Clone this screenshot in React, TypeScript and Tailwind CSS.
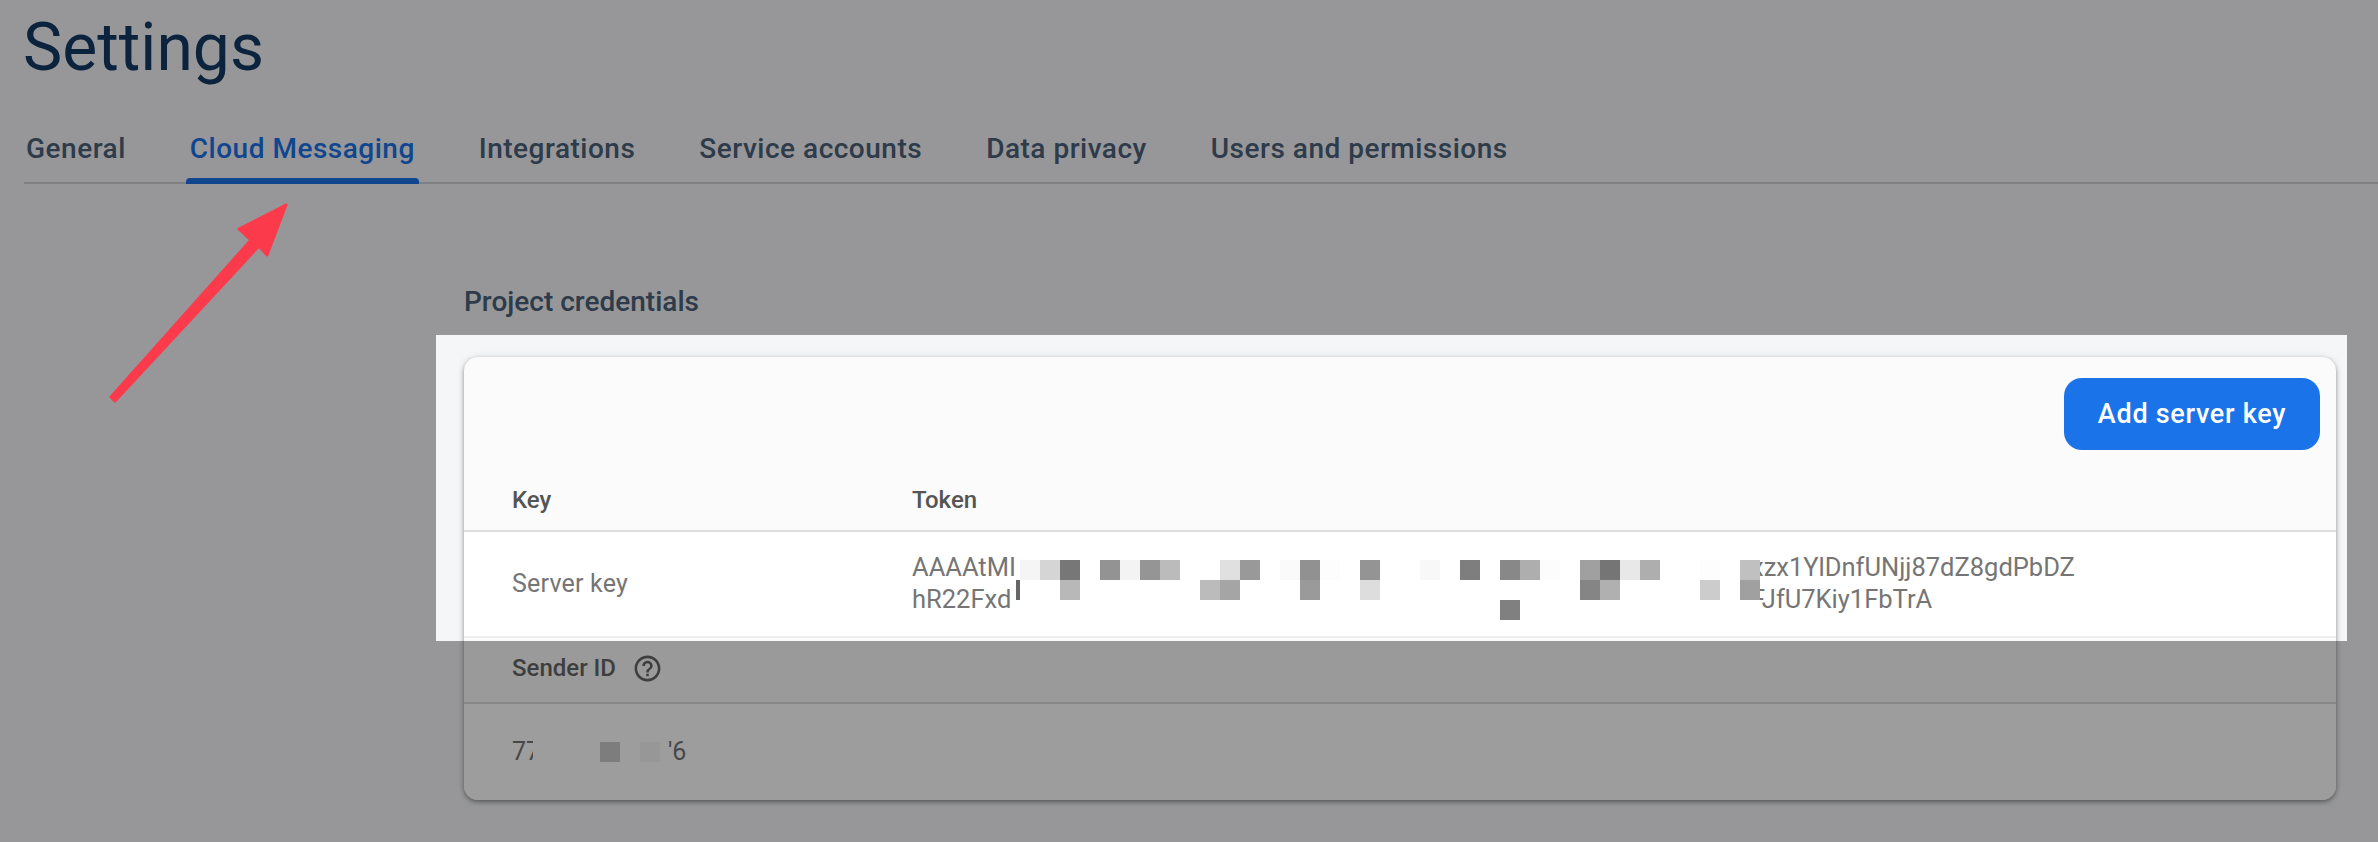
import { MdHelpOutline } from 'react-icons/md';

const TABS = [
  'General',
  'Cloud Messaging',
  'Integrations',
  'Service accounts',
  'Data privacy',
  'Users and permissions',
];

// Redacted part of the token: 20px blocks, '' leaves the white showing.
const MOSAIC: string[][] = [
  ['#f5f5f5', '#d5d5d5', '#777777', '', '#939393', '#f3f3f3', '#959595', '#bbbbbb', '', '', '#e0e0e0', '#999999', '', '#fafafa', '#919191', '#fdfdfd', '', '#949494', '', '', '#f8f8f8', '', '#7e7e7e', '', '#888888', '#aeaeae', '#fcfcfc', '', '#a0a0a0', '#757575', '#e8e8e8', '#aeaeae', '', '', '#fdfdfd', '', '#c0c0c0'],
  ['', '', '#b8b8b8', '', '', '', '', '', '', '#bbbbbb', '#a5a5a5', '', '', '', '#9a9a9a', '', '', '#dddddd', '', '', '', '', '', '', '', '', '', '', '#858585', '#b0b0b0', '', '', '', '', '#cccccc', '', '#a0a0a0'],
  ['', '', '', '', '', '', '', '', '', '', '', '', '', '', '', '', '', '', '', '', '', '', '', '', '#808080', '', '', '', '', '', '', '', '', '', '', '', ''],
];

function Tab({ label, active }: { label: string; active: boolean }) {
  return (
    <div className="flex flex-col items-center">
      <span
        className={`px-1 text-[28px] leading-[40px] font-medium tracking-[0.5px] whitespace-nowrap ${
          active ? 'text-[#1a73e8]' : 'text-[#4a6079]'
        }`}
      >
        {label}
      </span>
      <div
        className={`mt-[9px] -mb-[2px] h-[6px] w-full rounded-t-[4px] ${
          active ? 'bg-[#1a73e8]' : 'bg-transparent'
        }`}
      />
    </div>
  );
}

function TokenCell() {
  return (
    <div className="flex items-start pt-[2px] text-[25.5px] leading-[32px] text-[#757575]">
      <div className="w-[108px] whitespace-nowrap">
        <div>AAAAtMI</div>
        <div>hR22Fxd</div>
      </div>
      <div className="relative z-10 mt-[9px] grid grid-cols-[repeat(37,20px)] auto-rows-[20px] bg-white">
        <div className="absolute -left-[4px] top-[20px] h-[20px] w-[4px] bg-[#666666]" />
        {MOSAIC.flat().map((color, i) => (
          <div key={i} style={{ backgroundColor: color || undefined }} />
        ))}
      </div>
      <div className="-ml-[9px] whitespace-nowrap">
        <div>xzx1YlDnfUNjj87dZ8gdPbDZ</div>
        <div>FJfU7Kiy1FbTrA</div>
      </div>
    </div>
  );
}

function CredentialsCard() {
  return (
    <div className="rounded-[14px] bg-[#fbfbfb] shadow-[0_2px_4px_rgba(0,0,0,0.35),0_1px_8px_rgba(0,0,0,0.12)]">
      <div className="flex h-[93px] items-end justify-end pr-[16px]">
        <button className="h-[72px] w-[256px] rounded-[18px] bg-[#1a73e8] text-[27px] font-medium tracking-[0.7px] text-white">
          Add server key
        </button>
      </div>
      <div className="flex h-[82px] items-center border-b-2 border-[#dedede] pt-[20px] pl-[48px] text-[24px] font-medium text-[#555555]">
        <div className="w-[400px]">Key</div>
        <div>Token</div>
      </div>
      <div className="flex h-[106px] items-center border-b-2 border-[#eeeeee] bg-white pl-[48px]">
        <div className="w-[400px] text-[25px] tracking-[0.2px] text-[#757575]">Server key</div>
        <TokenCell />
      </div>
      <div className="flex h-[66px] items-center gap-[16px] border-b-2 border-[#dcdcdc] pb-[4px] pl-[48px] text-[#666666]">
        <span className="text-[24px] font-medium">Sender ID</span>
        <MdHelpOutline size={31} />
      </div>
      <div className="flex h-[96px] items-center rounded-b-[14px] bg-white pl-[48px] text-[25px] text-[#757575]">
        <span className="w-[21px] overflow-hidden whitespace-nowrap">777</span>
        <div className="ml-[67px] h-[20px] w-[20px] bg-[#cbcbcb]" />
        <div className="ml-[20px] h-[20px] w-[20px] bg-[#f5f5f5]" />
        <span className="ml-[8px]">'6</span>
      </div>
    </div>
  );
}

export default function App() {
  return (
    <div className="relative h-[842px] w-[2378px] overflow-hidden bg-[#f5f6f8] font-['Roboto',sans-serif]">
      <h1 className="pt-[12px] pl-[23px] text-[66px] leading-[72px] font-normal text-[#143a66]">
        Settings
      </h1>

      <div className="mt-[45px] ml-[24px] border-b-2 border-[#cfd1d4]">
        <nav className="-ml-[2px] flex gap-[56px]">
          {TABS.map((tab) => (
            <Tab key={tab} label={tab} active={tab === 'Cloud Messaging'} />
          ))}
        </nav>
      </div>

      <main className="pt-[100px] pr-[42px] pl-[464px]">
        <h2 className="mb-[37px] text-[28px] leading-[36px] font-medium text-[#4a6079]">
          Project credentials
        </h2>
        <CredentialsCard />
      </main>

      {/* Dimmed page with a cut-out around the key row */}
      <div className="absolute top-[335px] left-[436px] h-[306px] w-[1911px] shadow-[0_0_0_3000px_rgba(0,0,0,0.385)]" />

      <svg className="absolute top-0 left-0" width="400" height="420" viewBox="0 0 400 420">
        <polygon
          points="286,205 239,229 251,240 111,397 115,401 259,246 267,255"
          fill="#fb3a4b"
          stroke="#fb3a4b"
          strokeWidth="3"
          strokeLinejoin="round"
        />
      </svg>
    </div>
  );
}
